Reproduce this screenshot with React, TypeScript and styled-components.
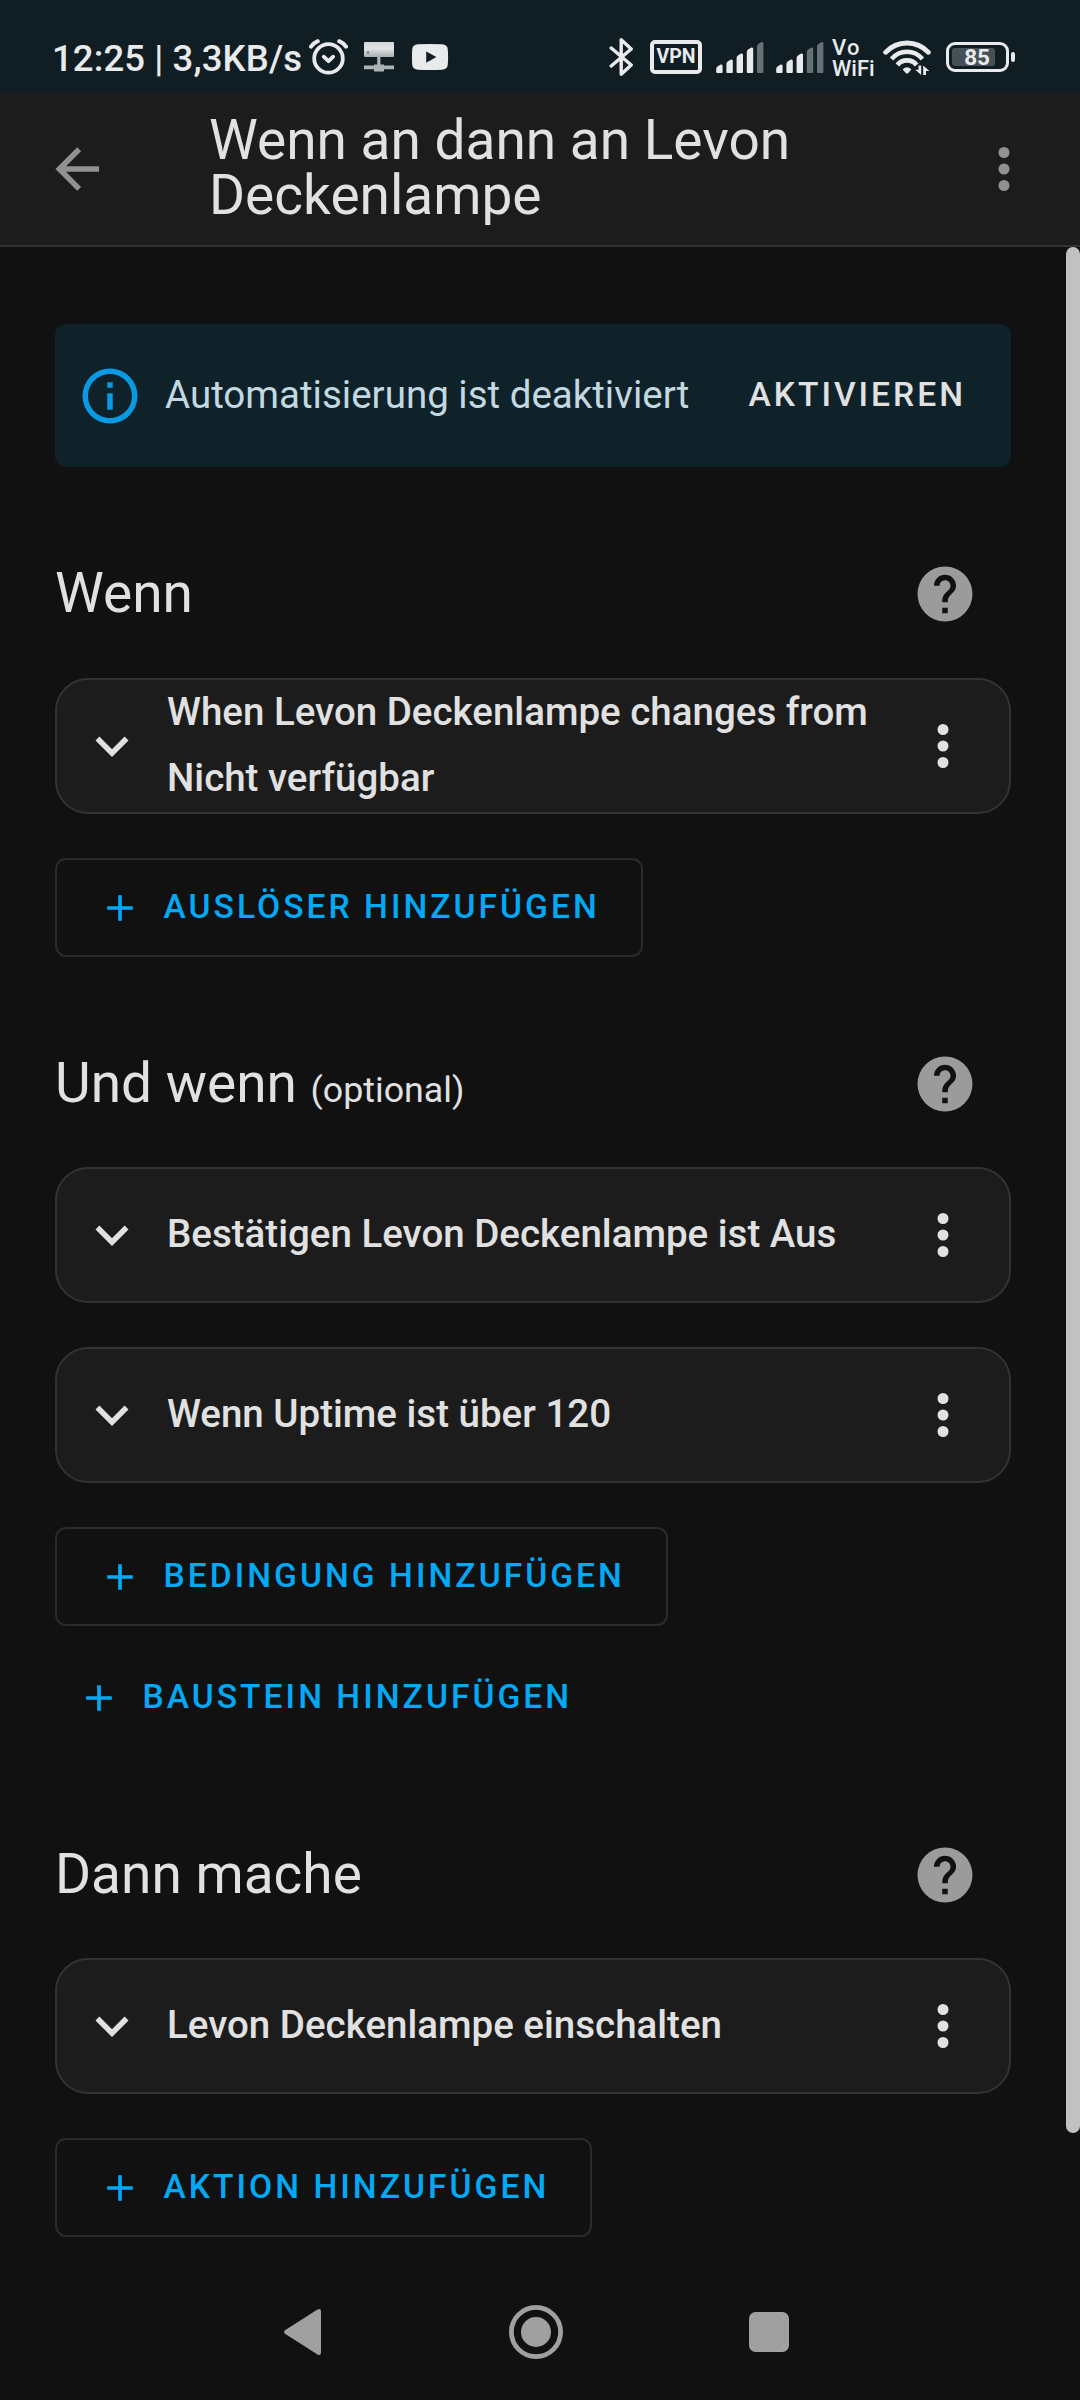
import React from "react";
import styled, { createGlobalStyle } from "styled-components";

const GlobalStyle = createGlobalStyle`
  * { box-sizing: border-box; }
  body { margin: 0; background: #111111; }
`;

const Screen = styled.div`
  position: relative;
  display: flex;
  flex-direction: column;
  width: 1080px;
  height: 2400px;
  overflow: hidden;
  background: #111111;
  color: #e1e1e1;
  font-family: Roboto, "Noto Sans", sans-serif;
`;

const StatusBar = styled.div`
  display: flex;
  flex: none;
  align-items: flex-start;
  justify-content: space-between;
  height: 93px;
  padding: 36px 65px 0 52px;
  background: #101e24;
  color: #e8eaec;
`;

const StatusGroup = styled.div`
  display: flex;
  align-items: center;
  height: 44px;
`;

const Clock = styled.span`
  width: 256px;
  padding-top: 2px;
  font-size: 36.5px;
  font-weight: 500;
  line-height: 44px;
  letter-spacing: 0.1px;
  white-space: nowrap;
`;

const Glyph = styled.svg<{ $gap?: number }>`
  display: block;
  flex: none;
  margin-left: ${(p) => p.$gap ?? 0}px;
`;

const VpnBadge = styled.span`
  display: flex;
  align-items: center;
  justify-content: center;
  width: 52px;
  height: 34px;
  margin: 0 0 2px 15px;
  border: 4px solid #e8eaec;
  border-radius: 5px;
  font-size: 19.5px;
  font-weight: 700;
  line-height: 26px;
`;

const VoWifi = styled.span`
  display: flex;
  flex-direction: column;
  width: 43px;
  margin-left: 8px;
  font-size: 22px;
  font-weight: 500;
  line-height: 21px;
`;

const Vo = styled.span`
  letter-spacing: 1.2px;
`;

const Battery = styled.span`
  display: flex;
  align-items: center;
  margin: 0 0 2px 15px;
`;

const BatteryShell = styled.span`
  width: 63px;
  height: 30px;
  padding: 3px;
  border: 3px solid #e8eaec;
  border-radius: 9px;
`;

const BatteryLevel = styled.span`
  display: flex;
  align-items: center;
  justify-content: flex-end;
  width: 43px;
  height: 18px;
  padding-right: 5px;
  border-radius: 3px;
  background: #455157;
  font-size: 22.5px;
  font-weight: 700;
  line-height: 18px;
`;

const BatteryTip = styled.span`
  width: 4px;
  height: 10px;
  margin-left: 2px;
  border-radius: 2px;
  background: #e8eaec;
`;

const AppBar = styled.header`
  display: flex;
  flex: none;
  align-items: center;
  height: 154px;
  padding: 0 43px 0 44px;
  border-bottom: 2px solid #333333;
  background: #1c1c1c;
`;

const Title = styled.h1`
  flex: 1;
  margin: 0 0 2px 99px;
  padding-right: 180px;
  font-size: 55px;
  font-weight: 400;
  line-height: 55px;
`;

const Content = styled.main`
  display: flex;
  flex: 1;
  flex-direction: column;
  padding: 77px 69px 0 55px;
`;

const Alert = styled.div`
  display: flex;
  flex: none;
  align-items: center;
  height: 143px;
  padding: 0 45px 0 22px;
  border-radius: 11px;
  background: #0f2229;
  color: #c3d8e0;
`;

const AlertText = styled.span`
  flex: 1;
  margin-left: 22px;
  padding-bottom: 2px;
  font-size: 38.5px;
  line-height: 52px;
  white-space: nowrap;
`;

const AlertAction = styled.button`
  padding: 0 0 2px;
  border: 0;
  background: none;
  color: #e1e1e1;
  font: 500 33.6px/44px Roboto, "Noto Sans", sans-serif;
  letter-spacing: 3px;
`;

const Section = styled.section<{ $top: number }>`
  display: flex;
  flex: none;
  flex-direction: column;
  align-items: flex-start;
  margin-top: ${(p) => p.$top}px;
`;

const SectionHead = styled.div`
  display: flex;
  align-items: center;
  justify-content: space-between;
  width: 100%;
  height: 132px;
  margin-bottom: 17px;
  padding-right: 33px;
`;

const Heading = styled.h2`
  margin: 0;
  padding-bottom: 2px;
  font-size: 55px;
  font-weight: 400;
  line-height: 66px;
  white-space: nowrap;
`;

const Optional = styled.small`
  font-size: 35.75px;
  line-height: 1;
`;

const Card = styled.div`
  display: flex;
  align-items: center;
  width: 100%;
  height: 136px;
  margin-bottom: 44px;
  padding: 0 33px 0 22px;
  border: 2px solid #333333;
  border-radius: 33px;
  background: #1c1c1c;
`;

const CardTitle = styled.h3`
  flex: 1;
  margin: 0 10px 2px 22px;
  font-size: 38.5px;
  font-weight: 500;
  line-height: 66px;
`;

const AddButton = styled.button<{ $plain?: boolean }>`
  display: flex;
  align-items: center;
  height: 99px;
  margin: 0 0 ${(p) => (p.$plain ? 0 : 22)}px;
  padding: ${(p) => (p.$plain ? "0 22px" : "0 41px 0 41px")};
  border: ${(p) => (p.$plain ? "0" : "2px solid #2b2b2b")};
  border-radius: 11px;
  background: none;
  color: #03a9f4;
  font: 500 33.6px/44px Roboto, "Noto Sans", sans-serif;
  letter-spacing: 3.03px;
  white-space: nowrap;

  svg { margin-right: 21.5px; }
`;

const AddLabel = styled.span`
  padding-bottom: 2px;
`;

const FirstSection = styled(Section)`
  ${SectionHead} { margin-bottom: 18px; }
`;

const LastSection = styled(Section)`
  ${AddButton} { margin-bottom: 0; }
`;

const Scrollbar = styled.div`
  position: absolute;
  top: 247px;
  right: 0;
  width: 14px;
  height: 1886px;
  border-radius: 7px;
  background: #c1c1c1;
`;

const NavBar = styled.nav`
  display: flex;
  flex: none;
  align-items: center;
  justify-content: space-between;
  height: 136px;
  padding: 0 291px 0 284px;
`;

const paths = {
  back: "M20,11V13H8L13.5,18.5L12.08,19.92L4.16,12L12.08,4.08L13.5,5.5L8,11H20Z",
  dots: "M12,16A2,2 0 0,1 14,18A2,2 0 0,1 12,20A2,2 0 0,1 10,18A2,2 0 0,1 12,16M12,10A2,2 0 0,1 14,12A2,2 0 0,1 12,14A2,2 0 0,1 10,12A2,2 0 0,1 12,10M12,4A2,2 0 0,1 14,6A2,2 0 0,1 12,8A2,2 0 0,1 10,6A2,2 0 0,1 12,4Z",
  info: "M11,9H13V7H11M12,20C7.59,20 4,16.41 4,12C4,7.59 7.59,4 12,4C16.41,4 20,7.59 20,12C20,16.41 16.41,20 12,20M12,2A10,10 0 0,0 2,12A10,10 0 0,0 12,22A10,10 0 0,0 22,12A10,10 0 0,0 12,2M11,17H13V11H11V17Z",
  help: "M15.07,11.25L14.17,12.17C13.45,12.89 13,13.5 13,15H11V14.5C11,13.39 11.45,12.39 12.17,11.67L13.41,10.41C13.78,10.05 14,9.55 14,9C14,7.89 13.1,7 12,7A2,2 0 0,0 10,9H8A4,4 0 0,1 12,5A4,4 0 0,1 16,9C16,9.88 15.64,10.67 15.07,11.25M13,19H11V17H13M12,2A10,10 0 0,0 2,12A10,10 0 0,0 12,22A10,10 0 0,0 22,12C22,6.47 17.5,2 12,2Z",
  chevron: "M7.41,8.58L12,13.17L16.59,8.58L18,10L12,16L6,10L7.41,8.58Z",
  plus: "M19,13H13V19H11V13H5V11H11V5H13V11H19V13Z",
};

function Icon({ name, size = 66, color = "currentColor" }: { name: keyof typeof paths; size?: number; color?: string }) {
  return (
    <Glyph width={size} height={size} viewBox="0 0 24 24" fill={color}>
      <path d={paths[name]} />
    </Glyph>
  );
}

function Signal({ level, gap }: { level: number; gap: number }) {
  const tops = [22.5, 17.5, 11.5, 5.5, 0];
  return (
    <Glyph $gap={gap} width="48" height="44" viewBox="0 0 48 44">
      {tops.map((t, i) => {
        const x = i * 10.2 + 0.2;
        const y = t + 5.5;
        return (
          <path
            key={i}
            d={`M${x} ${y + 5}Q${x} ${y + 3} ${x + 2} ${y + 2}L${x + 4.6} ${y + 0.6}Q${x + 6.4} ${y} ${x + 6.4} ${y + 2}V36Q${x + 6.4} 37 ${x + 5.4} 37H${x + 1}Q${x} 37 ${x} 36Z`}
            fill={i < level ? "#e8eaec" : "#667076"}
          />
        );
      })}
    </Glyph>
  );
}

function Row({ children }: { children: React.ReactNode }) {
  return (
    <Card>
      <Icon name="chevron" />
      <CardTitle>{children}</CardTitle>
      <Icon name="dots" />
    </Card>
  );
}

function Head({ title, hint }: { title: string; hint?: string }) {
  return (
    <SectionHead>
      <Heading>
        {title}
        {hint && <> <Optional>{hint}</Optional></>}
      </Heading>
      <Icon name="help" color="#9b9b9b" />
    </SectionHead>
  );
}

function Add({ label, plain }: { label: string; plain?: boolean }) {
  return (
    <AddButton $plain={plain}>
      <Icon name="plus" size={44} />
      <AddLabel>{label}</AddLabel>
    </AddButton>
  );
}

function StatusIcons() {
  return (
    <StatusBar>
      <StatusGroup>
        <Clock>12:25 | 3,3KB/s</Clock>
        <Glyph width="40" height="44" viewBox="0 0 40 44" fill="none" stroke="#e8eaec" strokeLinecap="round" strokeLinejoin="round">
          <circle cx="20.5" cy="22.4" r="14.3" strokeWidth="3.8" />
          <path d="M15.7 20.7L20.5 25.2L25.2 20.7" strokeWidth="3.8" />
          <path d="M3 10.7Q5.5 7 9.8 5.2M38 10.7Q35.5 7 31.2 5.2" strokeWidth="4" />
        </Glyph>
        <Glyph $gap={16} width="30" height="44" viewBox="0 0 30 44">
          <defs>
            <linearGradient id="screen" x1="0" y1="0" x2="0" y2="1">
              <stop offset="0" stopColor="#d4d6d7" />
              <stop offset="0.45" stopColor="#e2e3e4" />
              <stop offset="1" stopColor="#a9adaf" />
            </linearGradient>
          </defs>
          <rect x="0" y="6" width="30" height="15" rx="1" fill="url(#screen)" />
          <circle cx="4" cy="16.5" r="1.2" fill="#70777a" />
          <path d="M13.2 21H16.4V28.5H20V29.6H30V33.2H20V35.5H10V33.2H0V29.6H10V28.5H13.2Z" fill="#aeb2b4" />
        </Glyph>
        <Glyph $gap={18} width="37" height="44" viewBox="0 0 37 44">
          <path fillRule="evenodd" fill="#e8eaec" d="M6 8.3Q18 7.7 30 8.3Q35.5 8.5 35.8 13.5Q36.4 21 35.8 28.5Q35.5 33.4 30 33.7Q18 34.3 6 33.7Q0.5 33.4 0.2 28.5Q-0.3 21 0.2 13.5Q0.5 8.5 6 8.3ZM14.2 15.6V26.7L24.4 21.1Z" />
        </Glyph>
      </StatusGroup>
      <StatusGroup>
        <Glyph width="26" height="44" viewBox="0 0 26 44" fill="none" stroke="#e8eaec" strokeWidth="3.4" strokeLinecap="round" strokeLinejoin="round">
          <path d="M2.2 12L22.2 29L12.2 38.2V3.8L22.2 13L2.2 30" />
        </Glyph>
        <VpnBadge>VPN</VpnBadge>
        <Signal level={4} gap={14} />
        <Signal level={3} gap={12} />
        <VoWifi>
          <Vo>Vo</Vo>
          <span>WiFi</span>
        </VoWifi>
        <Glyph $gap={8} width="48" height="44" viewBox="0 0 48 44" fill="none" stroke="#e8eaec">
          <path d="M2.6 16.3Q11.5 7 24 7T45.4 16.3" strokeWidth="4.8" strokeLinecap="round" />
          <path d="M8.6 23Q14.7 15.7 24 15.7T39.4 23" strokeWidth="4.6" />
          <path d="M14.4 29Q18 24.4 24 24.4T33.6 29" strokeWidth="4.6" />
          <path d="M19.6 33.4Q24 28.9 28.4 33.4L25 37.2Q24 38 23 37.2Z" fill="#e8eaec" stroke="none" />
          <path d="M38.2 29.5V39L32.3 33.8H35.5V29.5ZM40.2 39V29.5L46.4 35H43V39Z" fill="#e8eaec" stroke="none" />
        </Glyph>
        <Battery>
          <BatteryShell>
            <BatteryLevel>85</BatteryLevel>
          </BatteryShell>
          <BatteryTip />
        </Battery>
      </StatusGroup>
    </StatusBar>
  );
}

export default function App() {
  return (
    <Screen>
      <GlobalStyle />
      <StatusIcons />
      <AppBar>
        <Icon name="back" color="#919191" />
        <Title>Wenn an dann an Levon Deckenlampe</Title>
        <Icon name="dots" color="#919191" />
      </AppBar>
      <Content>
        <Alert>
          <Icon name="info" color="#0a9ae3" />
          <AlertText>Automatisierung ist deaktiviert</AlertText>
          <AlertAction>AKTIVIEREN</AlertAction>
        </Alert>
        <FirstSection $top={61}>
          <Head title="Wenn" />
          <Row>When Levon Deckenlampe changes from Nicht verfügbar</Row>
          <Add label="AUSLÖSER HINZUFÜGEN" />
        </FirstSection>
        <Section $top={39}>
          <Head title="Und wenn" hint="(optional)" />
          <Row>Bestätigen Levon Deckenlampe ist Aus</Row>
          <Row>Wenn Uptime ist über 120</Row>
          <Add label="BEDINGUNG HINZUFÜGEN" />
          <Add label="BAUSTEIN HINZUFÜGEN" plain />
        </Section>
        <LastSection $top={62}>
          <Head title="Dann mache" />
          <Row>Levon Deckenlampe einschalten</Row>
          <Add label="AKTION HINZUFÜGEN" />
        </LastSection>
      </Content>
      <NavBar>
        <Glyph width="38" height="48" viewBox="0 0 38 48">
          <path d="M1 22.3L33.5 1.6Q37 0 37 3.5V44.5Q37 48 33.5 46.4L1 25.7Q-0.8 24 1 22.3Z" fill="#a0a0a0" />
        </Glyph>
        <Glyph width="54" height="54" viewBox="0 0 54 54">
          <circle cx="27" cy="27" r="24.6" fill="none" stroke="#a0a0a0" strokeWidth="4.8" />
          <circle cx="27" cy="27" r="15" fill="#a0a0a0" />
        </Glyph>
        <Glyph width="40" height="40" viewBox="0 0 40 40">
          <rect width="40" height="40" rx="6.5" fill="#a0a0a0" />
        </Glyph>
      </NavBar>
      <Scrollbar />
    </Screen>
  );
}
